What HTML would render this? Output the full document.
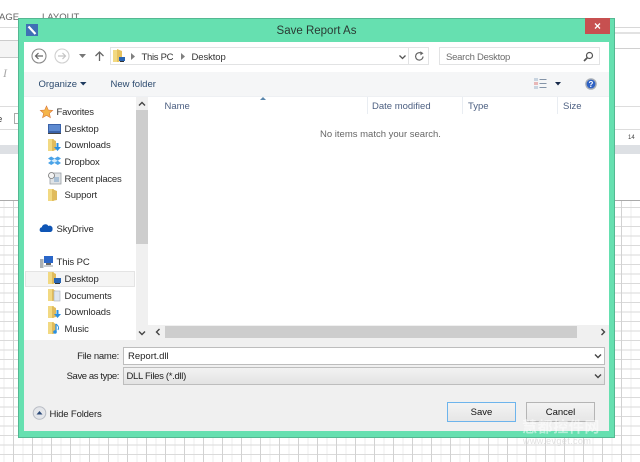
<!DOCTYPE html>
<html>
<head>
<meta charset="utf-8">
<style>
html,body{margin:0;padding:0;background:#fff}
body{width:640px;height:462px;overflow:hidden;position:relative}
#w{position:absolute;left:0;top:0;width:640px;height:462px;overflow:hidden;background:#fff;filter:blur(.35px);font-family:"Liberation Sans","DejaVu Sans",sans-serif;font-size:9.5px;color:#222}
.a{position:absolute}
.t{position:absolute;white-space:nowrap;line-height:12px;font-size:9.5px}
.nav{color:#2b2b2b;left:64.5px;letter-spacing:-.1px}
.hd{color:#4d6082}
svg{position:absolute;overflow:visible}
.grid{position:absolute;left:0;top:200px;width:640px;height:262px;
background-color:#fff;
background-image:
linear-gradient(to right,#d2d2d2 1px,transparent 1px),
linear-gradient(to bottom,#dadada 1px,transparent 1px),
linear-gradient(to right,#ececec 1px,transparent 1px);
background-size:19px 19px,9.5px 9.5px,9.5px 9.5px;
background-position:13px 0,0 7px,3.5px 0}
</style>
</head>
<body>
<div id="w">
<!-- background app -->
<div class="t" style="left:-1px;top:12px;color:#666">AGE</div>
<div class="t" style="left:42px;top:12px;color:#666">LAYOUT</div>
<div class="a" style="left:0;top:27px;width:18px;height:1px;background:#ddd"></div>
<div class="a" style="left:0;top:40px;width:18px;height:16px;background:#f4f4f4;border-top:1px solid #ccc;border-bottom:1px solid #ccc"></div>
<div class="t" style="left:3px;top:67px;color:#aaa;font-family:'Liberation Serif',serif;font-style:italic;font-size:12px">I</div>
<div class="a" style="left:0;top:106px;width:18px;height:1px;background:#ddd"></div>
<div class="t" style="left:-3px;top:114px;color:#333">e</div>
<div class="a" style="left:14px;top:113px;width:4px;height:11px;border:1px solid #aaa;box-sizing:border-box;border-right:0"></div>
<div class="a" style="left:0;top:129px;width:18px;height:1px;background:#ddd"></div>
<div class="a" style="left:0;top:145px;width:18px;height:9px;background:#dde0e4"></div>
<div class="a" style="left:615px;top:27px;width:25px;height:1px;background:#d8d8d8"></div>
<div class="a" style="left:615px;top:32px;width:25px;height:2px;background:#e2e2e2"></div>
<div class="a" style="left:615px;top:48px;width:25px;height:1px;background:#d0d0d0"></div>
<div class="a" style="left:615px;top:106px;width:25px;height:1px;background:#ddd"></div>
<div class="a" style="left:615px;top:129px;width:25px;height:1px;background:#ddd"></div>
<div class="t" style="left:628px;top:134px;font-size:6px;line-height:8px;color:#444">14</div>
<div class="a" style="left:615px;top:145px;width:25px;height:9px;background:#dde0e4"></div>
<div class="grid"></div>
<div class="a" style="left:0;top:200px;width:640px;height:1px;background:#aaa"></div>

<!-- dialog frame -->
<div class="a" style="left:18px;top:18px;width:597px;height:420px;box-sizing:border-box;background:#66e0b0;border:1px solid #54b892"></div>
<div class="t" style="left:18px;width:597px;top:24px;text-align:center;font-size:11.5px;line-height:14px;color:#2a3a33">Save Report As</div>
<!-- app icon -->
<div class="a" style="left:26px;top:24px;width:12px;height:12px;background:#3f6fb5"></div>
<svg style="left:26px;top:24px" width="12" height="12"><path d="M2.5 2.5L9.5 10" stroke="#fff" stroke-width="2.2"/></svg>
<!-- close -->
<div class="a" style="left:585px;top:18px;width:25px;height:16px;background:#c75050"></div>
<svg style="left:585px;top:18px" width="25" height="16"><path d="M10 5.5L15 10.5M15 5.5L10 10.5" stroke="#fff" stroke-width="1.3"/></svg>

<!-- client -->
<div class="a" style="left:24px;top:42px;width:585px;height:389px;background:#f0f0f0"></div>
<div class="a" style="left:24px;top:42px;width:585px;height:30px;background:#fff"></div>
<div class="a" style="left:24px;top:72px;width:585px;height:24px;background:#f5f6f7"></div>
<div class="a" style="left:24px;top:96px;width:585px;height:1px;background:#eef0f3"></div>
<div class="a" style="left:24px;top:97px;width:585px;height:243px;background:#fff"></div>

<!-- nav buttons -->
<svg style="left:31px;top:48px" width="16" height="16"><circle cx="8" cy="8" r="7" fill="#fff" stroke="#8a8a8a" stroke-width="1.1"/><path d="M12 8H4.5M7.5 5L4.5 8L7.5 11" fill="none" stroke="#666" stroke-width="1.2"/></svg>
<svg style="left:54px;top:48px" width="16" height="16"><circle cx="8" cy="8" r="7" fill="#fff" stroke="#d0d0d0" stroke-width="1.1"/><path d="M4 8H11.5M8.5 5L11.5 8L8.5 11" fill="none" stroke="#c4c4c4" stroke-width="1.2"/></svg>
<svg style="left:79px;top:54px" width="8" height="5"><path d="M0 0H7L3.5 4Z" fill="#777"/></svg>
<svg style="left:94px;top:50px" width="11" height="12"><path d="M5.5 11V2M1.5 6L5.5 2L9.5 6" fill="none" stroke="#666" stroke-width="1.3"/></svg>

<!-- address bar -->
<div class="a" style="left:110px;top:47px;width:319px;height:18px;box-sizing:border-box;border:1px solid #e2e3e4;background:#fff"></div>
<div class="a" style="left:408px;top:47px;width:1px;height:18px;background:#e2e3e4"></div>
<svg style="left:113px;top:49px" width="13" height="14"><path d="M0 1H6V13H0Z" fill="#f2d982"/><path d="M4 0L9 2V12L4 13Z" fill="#e6c25f"/><rect x="6" y="8" width="6" height="4" fill="#2a66b3"/><rect x="7" y="12" width="4" height="1" fill="#333"/></svg>
<svg style="left:131px;top:53px" width="5" height="7"><path d="M0 0L4 3.5L0 7Z" fill="#808080"/></svg>
<div class="t" style="left:141.5px;top:51.5px;color:#333;letter-spacing:-.3px">This PC</div>
<svg style="left:181px;top:53px" width="5" height="7"><path d="M0 0L4 3.5L0 7Z" fill="#808080"/></svg>
<div class="t" style="left:191.5px;top:51.5px;color:#333;letter-spacing:-.1px">Desktop</div>
<svg style="left:399px;top:55px" width="7" height="5"><path d="M0.5 0.5L3.5 3.5L6.5 0.5" fill="none" stroke="#555" stroke-width="1.3"/></svg>
<svg style="left:414px;top:51px" width="11" height="11"><path d="M9 5.5A3.7 3.7 0 1 1 7.5 2.4" fill="none" stroke="#666" stroke-width="1.2"/><path d="M6.3 0.2L9.5 2.2L6.5 4.4Z" fill="#666"/></svg>

<!-- search -->
<div class="a" style="left:439px;top:47px;width:161px;height:18px;box-sizing:border-box;border:1px solid #e2e3e4;background:#fff"></div>
<div class="t" style="left:446px;top:51.5px;color:#6d6d6d;letter-spacing:-.25px">Search Desktop</div>
<svg style="left:583px;top:51px" width="11" height="11"><circle cx="6.5" cy="4.5" r="3" fill="none" stroke="#555" stroke-width="1.2"/><path d="M4.5 6.5L1 10" stroke="#555" stroke-width="1.7"/></svg>

<!-- toolbar -->
<div class="t" style="left:38.5px;top:78.5px;color:#2c4a6e">Organize</div>
<svg style="left:80px;top:81.5px" width="7" height="4"><path d="M0 0H6.5L3.2 3.5Z" fill="#1e3a5f"/></svg>
<div class="t" style="left:110.5px;top:78.5px;color:#2c4a6e">New folder</div>
<svg style="left:534px;top:78px" width="13" height="11"><rect x="0" y="0" width="4" height="3" fill="#c8d4e0"/><rect x="0" y="4" width="4" height="3" fill="#e8b8b8"/><rect x="0" y="8" width="4" height="3" fill="#c8d4e0"/><path d="M5.5 1.5H12.5M5.5 5.5H12.5M5.5 9.5H12.5" stroke="#8494a8" stroke-width="1"/></svg>
<svg style="left:555px;top:81.5px" width="7" height="4"><path d="M0 0H6L3 3.5Z" fill="#16294a"/></svg>
<svg style="left:585px;top:78px" width="12" height="12"><circle cx="6" cy="6" r="5.8" fill="#a8aeb6"/><circle cx="6" cy="6" r="4.4" fill="#2f62c4"/><text x="6" y="9" text-anchor="middle" font-size="8" font-weight="bold" fill="#fff" font-family="Liberation Sans">?</text></svg>

<!-- sidebar scrollbar -->
<div class="a" style="left:136px;top:97px;width:12px;height:243px;background:#f0f0f0"></div>
<div class="a" style="left:136px;top:110px;width:12px;height:134px;background:#cdcdcd"></div>
<svg style="left:138px;top:101px" width="8" height="6"><path d="M1 4.5L4 1.5L7 4.5" fill="none" stroke="#444" stroke-width="1.4"/></svg>
<svg style="left:138px;top:330px" width="8" height="6"><path d="M1 1.5L4 4.5L7 1.5" fill="none" stroke="#444" stroke-width="1.4"/></svg>

<!-- sidebar -->
<svg style="left:40px;top:106px" width="13" height="12"><path d="M6.5 0L8.3 4L12.7 4.4L9.4 7.3L10.4 11.7L6.5 9.4L2.6 11.7L3.6 7.3L0.3 4.4L4.7 4Z" fill="#f5b54a" stroke="#d9763a" stroke-width=".6"/></svg>
<div class="t nav" style="left:56.5px;top:107px;letter-spacing:-.2px">Favorites</div>
<svg style="left:48px;top:124px" width="13" height="10"><rect x="0" y="0" width="13" height="9" fill="#3a62a8"/><rect x="1" y="1" width="11" height="6" fill="#5d8ad0"/><rect x="0" y="9" width="13" height="1" fill="#444"/></svg>
<div class="t nav" style="top:123.5px">Desktop</div>
<svg style="left:48px;top:139px" width="13" height="13"><path d="M0 0H6V12H0Z" fill="#f2d982"/><path d="M4 0L8 2V11L4 12Z" fill="#e0bb5c"/><path d="M8.5 4V8H6L9.5 12L13 8H10.5V4Z" fill="#2a8fe0"/></svg>
<div class="t nav" style="top:140px">Downloads</div>
<svg style="left:48px;top:156px" width="13" height="11"><path d="M0 2.5L3.2 0.5L6.5 2.5L9.8 0.5L13 2.5L9.8 4.8L13 7L9.8 9L6.5 7L3.2 9L0 7L3.2 4.8Z" fill="#4aa3e8"/><path d="M3.2 4.8L6.5 2.7L9.8 4.8L6.5 6.8Z" fill="#d5ecfb"/></svg>
<div class="t nav" style="top:156.5px">Dropbox</div>
<svg style="left:48px;top:172px" width="13" height="13"><rect x="2" y="1" width="11" height="11" fill="#dfe3e6" stroke="#9aa0a6" stroke-width=".8"/><rect x="6" y="5" width="5" height="5" fill="#a9c0d6"/><circle cx="3.5" cy="3.5" r="3" fill="#f3f3f3" stroke="#777" stroke-width=".8"/></svg>
<div class="t nav" style="top:173.5px;letter-spacing:-.25px">Recent places</div>
<svg style="left:48px;top:189px" width="11" height="13"><path d="M0 0H6V12H0Z" fill="#f2d982"/><path d="M4 0L9 2V11L4 12Z" fill="#e0bb5c"/></svg>
<div class="t nav" style="top:190px">Support</div>
<svg style="left:40px;top:223px" width="13" height="10"><path d="M1 9A2.5 2.5 0 0 1 1.8 4.3A3.6 3.6 0 0 1 8.4 3A2.8 2.8 0 0 1 12.5 6A2.5 2.5 0 0 1 10.5 9Z" fill="#0f55b5"/></svg>
<div class="t nav" style="left:56.5px;top:223.5px">SkyDrive</div>
<svg style="left:40px;top:256px" width="13" height="12"><rect x="4" y="0" width="9" height="7" fill="#2a66c8"/><rect x="6" y="7" width="5" height="2" fill="#666"/><rect x="0" y="3" width="3.5" height="9" fill="#aab0b4"/><rect x="4" y="9" width="9" height="2" fill="#c8ccd0"/></svg>
<div class="t nav" style="left:56.5px;top:257px">This PC</div>
<div class="a" style="left:25px;top:271px;width:110px;height:16px;box-sizing:border-box;background:#f5f5f5;border:1px solid #e4e4e4"></div>
<svg style="left:48px;top:272px" width="13" height="13"><path d="M0 0H6V12H0Z" fill="#f2d982"/><path d="M4 0L8 2V11L4 12Z" fill="#e0bb5c"/><rect x="6" y="6" width="7" height="5" fill="#2a66b3"/><rect x="7" y="11" width="5" height="1" fill="#333"/></svg>
<div class="t nav" style="top:273.5px">Desktop</div>
<svg style="left:48px;top:289px" width="13" height="13"><path d="M0 0H6V12H0Z" fill="#f2d982"/><path d="M4 0L8 2V11L4 12Z" fill="#e0bb5c"/><rect x="6" y="2" width="6" height="10" fill="#dfe6ef" stroke="#a8b0ba" stroke-width=".6"/></svg>
<div class="t nav" style="top:290.5px">Documents</div>
<svg style="left:48px;top:306px" width="13" height="13"><path d="M0 0H6V12H0Z" fill="#f2d982"/><path d="M4 0L8 2V11L4 12Z" fill="#e0bb5c"/><path d="M8.5 4V8H6L9.5 12L13 8H10.5V4Z" fill="#2a8fe0"/></svg>
<div class="t nav" style="top:307px">Downloads</div>
<svg style="left:48px;top:322px" width="13" height="13"><path d="M0 0H6V12H0Z" fill="#f2d982"/><path d="M4 0L8 2V11L4 12Z" fill="#e0bb5c"/><path d="M8 2V10" stroke="#2a8fe0" stroke-width="1.3"/><circle cx="7" cy="10" r="1.8" fill="#2a8fe0"/><path d="M8 2C11 4 11 6 10 8" fill="none" stroke="#2a8fe0" stroke-width="1"/></svg>
<div class="t nav" style="top:323.5px">Music</div>

<!-- column headers -->
<svg style="left:260px;top:97px" width="6" height="4"><path d="M0 3L3 0L6 3Z" fill="#5b87ad"/></svg>
<div class="t hd" style="left:164.5px;top:100.5px">Name</div>
<div class="t hd" style="left:372px;top:100.5px">Date modified</div>
<div class="t hd" style="left:468px;top:100.5px">Type</div>
<div class="t hd" style="left:563px;top:100.5px">Size</div>
<div class="a" style="left:367px;top:97px;width:1px;height:17px;background:#e9edf2"></div>
<div class="a" style="left:462px;top:97px;width:1px;height:17px;background:#e9edf2"></div>
<div class="a" style="left:557px;top:97px;width:1px;height:17px;background:#e9edf2"></div>
<div class="t" style="left:320px;top:128.5px;color:#666">No items match your search.</div>

<!-- horizontal scrollbar -->
<div class="a" style="left:148px;top:325px;width:461px;height:15px;background:#f0f0f0"></div>
<div class="a" style="left:165px;top:326px;width:412px;height:12px;background:#cdcdcd"></div>
<svg style="left:155px;top:328px" width="6" height="8"><path d="M4.5 1L1.5 4L4.5 7" fill="none" stroke="#444" stroke-width="1.4"/></svg>
<svg style="left:600px;top:328px" width="6" height="8"><path d="M1.5 1L4.5 4L1.5 7" fill="none" stroke="#444" stroke-width="1.4"/></svg>

<!-- filename fields -->
<div class="t" style="right:521px;top:350.5px;color:#222;letter-spacing:-.25px">File name:</div>
<div class="a" style="left:123px;top:347px;width:482px;height:18px;box-sizing:border-box;background:#fff;border:1px solid #bdbdbd"></div>
<div class="t" style="left:128px;top:350.5px;color:#222">Report.dll</div>
<svg style="left:594px;top:354px" width="8" height="5"><path d="M1 .5L4 3.5L7 .5" fill="none" stroke="#444" stroke-width="1.4"/></svg>
<div class="t" style="right:521px;top:370.5px;color:#222;letter-spacing:-.4px">Save as type:</div>
<div class="a" style="left:123px;top:367px;width:482px;height:18px;box-sizing:border-box;background:linear-gradient(#f2f2f2,#e3e3e3);border:1px solid #bdbdbd"></div>
<div class="t" style="left:126.5px;top:370.5px;color:#222;letter-spacing:-.3px">DLL Files (*.dll)</div>
<svg style="left:594px;top:374px" width="8" height="5"><path d="M1 .5L4 3.5L7 .5" fill="none" stroke="#444" stroke-width="1.4"/></svg>

<!-- bottom -->
<svg style="left:33px;top:406px" width="14" height="14"><circle cx="6.5" cy="7" r="6.3" fill="#e4e6ea" stroke="#b8bcc4" stroke-width="1"/><path d="M3.5 8.5L6.5 5L9.5 8.5Z" fill="#2c4a78"/></svg>
<div class="t" style="left:49.5px;top:408.5px;color:#222;letter-spacing:-.15px">Hide Folders</div>
<div class="a" style="left:447px;top:402px;width:69px;height:20px;box-sizing:border-box;background:linear-gradient(#f3f3f3,#e6e6e6);border:1px solid #6db4ec;text-align:center;line-height:19px;color:#111">Save</div>
<div class="a" style="left:526px;top:402px;width:69px;height:20px;box-sizing:border-box;background:linear-gradient(#f3f3f3,#e6e6e6);border:1px solid #b5b5b5;text-align:center;line-height:19px;color:#111">Cancel</div>

<!-- watermark -->
<div class="t" style="left:522px;top:418px;font-family:'Noto Sans CJK SC',sans-serif;font-size:15px;line-height:18px;font-weight:bold;color:rgba(255,255,255,.5);letter-spacing:.6px">慧都控件网</div>
<div class="t" style="left:523px;top:436px;font-size:9px;line-height:11px;color:rgba(215,215,215,.75);letter-spacing:.4px">www.evget.com</div>
</div>
</body>
</html>
